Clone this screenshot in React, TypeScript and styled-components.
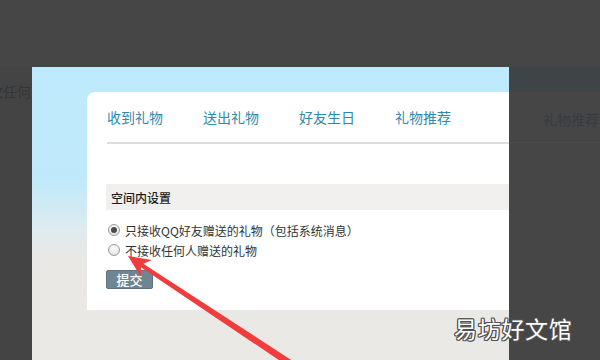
import React from "react";
import styled, { createGlobalStyle } from "styled-components";

const Global = createGlobalStyle`
  html, body { margin: 0; padding: 0; background: #464646; }
  body { font-family: "Noto Sans CJK SC", "Liberation Sans", sans-serif; }
  * { box-sizing: border-box; }
`;

const Page = styled.div`
  position: relative;
  width: 600px;
  height: 360px;
  overflow: hidden;
  background: #464646;
  display: flex;
  flex-direction: column;
`;

const TopShade = styled.div`
  height: 67px;
  flex: none;
`;

const Stage = styled.div`
  display: flex;
  flex: 1;
`;

const LeftStrip = styled.div`
  width: 32px;
  flex: none;
  overflow: hidden;
  background: #444444;
`;

const LeftText = styled.div`
  margin: 16px 0 0 -11px;
  font-size: 14px;
  line-height: 16px;
  color: #363636;
  white-space: nowrap;
`;

const Panel = styled.div`
  width: 477px;
  flex: none;
  padding: 25px 0 0 55px;
  background: linear-gradient(
    to bottom,
    #bdeafc 0%,
    #bfe9fa 38%,
    #dfebef 56%,
    #e9e8e5 66%,
    #ebe9e6 100%
  );
`;

const Card = styled.div`
  height: 218px;
  background: #ffffff;
  border-top-left-radius: 8px;
  padding: 0 0 0 20px;
  display: flex;
  flex-direction: column;
`;

const TabBar = styled.div`
  display: flex;
  gap: 40px;
  padding-top: 16px;
  height: 52px;
  border-bottom: 2px solid #dfddd7;
`;

const Tab = styled.span`
  font-size: 14px;
  line-height: 18px;
  color: #3089ad;
  white-space: nowrap;
`;

const SectionHeader = styled.div`
  margin: 40px 0 10px -1px;
  height: 26px;
  padding-left: 5px;
  display: flex;
  align-items: center;
  background: #f1f0ee;
  font-size: 12px;
  font-weight: 500;
  color: #1e1e1e;
`;

const RadioRow = styled.label`
  display: flex;
  align-items: center;
  height: 20px;
  margin-left: 1px;
  font-size: 12px;
  color: #333;
  white-space: nowrap;
`;

const RadioDot = styled.span<{ $checked?: boolean }>`
  width: 12px;
  height: 12px;
  border-radius: 50%;
  border: 1px solid #9c9c9c;
  background: radial-gradient(circle at 50% 35%, #ffffff 0%, #ececec 55%, #d2d2d2 100%);
  margin-right: 5px;
  display: flex;
  align-items: center;
  justify-content: center;
  &::after {
    content: "";
    display: ${(p) => (p.$checked ? "block" : "none")};
    width: 6px;
    height: 6px;
    border-radius: 50%;
    background: #4a4a4a;
  }
`;

const Submit = styled.button`
  margin: 10px 0 0 -1px;
  width: 47px;
  height: 19px;
  padding: 0;
  border: 1px solid #5d7480;
  border-radius: 2px;
  background: #6f8692;
  color: #ffffff;
  font-family: "Noto Sans CJK SC", sans-serif;
  font-size: 13px;
  font-weight: 500;
  line-height: 17px;
  align-self: flex-start;
`;

const RightStrip = styled.div`
  flex: 1;
  display: flex;
  flex-direction: column;
`;

const RightBand = styled.div`
  height: 25px;
  background: #3f4447;
`;

const RightTabs = styled.div`
  height: 51px;
  padding: 18px 0 0 34px;
  border-bottom: 1px solid #4b4b4b;
  font-size: 14px;
  line-height: 18px;
  color: #353c41;
  white-space: nowrap;
`;

const ArrowLayer = styled.svg`
  position: absolute;
  left: 0;
  top: 0;
  pointer-events: none;
`;

const Watermark = styled.div`
  position: absolute;
  left: 454px;
  top: 313px;
  font-size: 23px;
  line-height: 30px;
  color: #ffffff;
  letter-spacing: 0.7px;
  text-shadow: 1px 0 0 #505050, -1px 0 0 #505050, 0 1px 0 #505050, 0 -1px 0 #505050,
    1px 1px 0 #505050, -1px -1px 0 #505050, 1px -1px 0 #505050, -1px 1px 0 #505050;
  white-space: nowrap;
`;

const tabs = ["收到礼物", "送出礼物", "好友生日", "礼物推荐"];

export default function App() {
  return (
    <>
      <Global />
      <Page>
        <TopShade />
        <Stage>
          <LeftStrip>
            <LeftText>收任何人</LeftText>
          </LeftStrip>
          <Panel>
            <Card>
              <TabBar>
                {tabs.map((t) => (
                  <Tab key={t}>{t}</Tab>
                ))}
              </TabBar>
              <SectionHeader>空间内设置</SectionHeader>
              <RadioRow>
                <RadioDot $checked />
                只接收QQ好友赠送的礼物（包括系统消息）
              </RadioRow>
              <RadioRow>
                <RadioDot />
                不接收任何人赠送的礼物
              </RadioRow>
              <Submit>提交</Submit>
            </Card>
          </Panel>
          <RightStrip>
            <RightBand />
            <RightTabs>礼物推荐</RightTabs>
          </RightStrip>
        </Stage>
        <ArrowLayer width="600" height="360" viewBox="0 0 600 360">
          <polygon
            points="128,256 151.9,259.9 143.3,263.7 292.9,361.1 289.1,366.9 140.9,267.3 140.7,276.5"
            fill="#f03c3c"
          />
        </ArrowLayer>
        <Watermark>易坊好文馆</Watermark>
      </Page>
    </>
  );
}
